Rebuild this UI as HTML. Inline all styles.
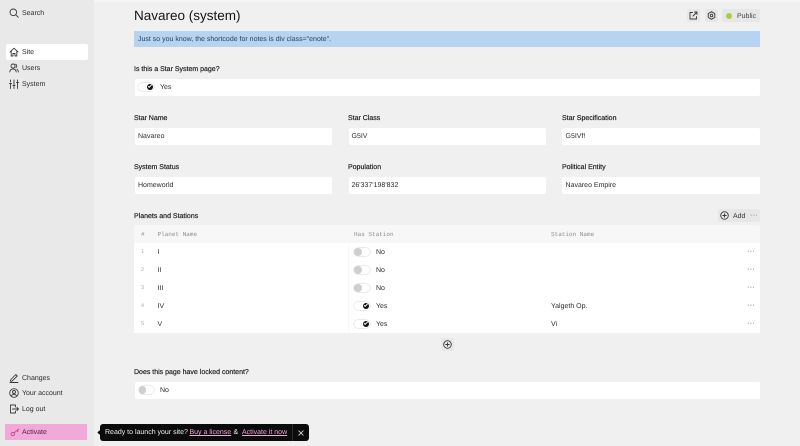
<!DOCTYPE html>
<html><head><meta charset="utf-8">
<style>
html,body{margin:0;padding:0}
body{width:800px;height:446px;overflow:hidden;background:#f0f0f0;font-family:"Liberation Sans",sans-serif;color:#222;text-rendering:geometricPrecision}
#w{position:absolute;left:0;top:0;width:800px;height:446px;overflow:hidden;filter:blur(.3px)}
.a{position:absolute}
.t{position:absolute;margin-top:1px;font-size:7px;line-height:10px;white-space:nowrap;color:#2a2a2a}
.l{position:absolute;margin-top:1px;font-size:7px;line-height:10px;white-space:nowrap;color:#222;-webkit-text-stroke:.2px #222}
.box{position:absolute;background:#fff;border-radius:2px}
.m{position:absolute;font-family:"Liberation Mono",monospace;font-size:6px;line-height:10px;color:#8e8e8e;white-space:nowrap}
.n{position:absolute;font-size:5.500px;line-height:10px;color:#aaa}
.d{position:absolute;font-size:7px;line-height:8px;color:#222;letter-spacing:.4px}
.tg{position:absolute;width:15.500px;height:7.500px;border-radius:4px;background:#fff;box-shadow:0 0 0 .5px #d4d4d4}
.tg.off:before{content:"";position:absolute;left:0;top:0;width:7.500px;height:7.500px;border-radius:4px;background:#cfcfcf}
.tg.on:before{content:"";position:absolute;right:.5px;top:.5px;width:6.500px;height:6.500px;border-radius:4px;background:#111}
.tg.on:after{content:"";position:absolute;right:2.300px;top:2.300px;width:2.600px;height:1.200px;border-left:.7px solid #fff;border-bottom:.7px solid #fff;transform:rotate(-45deg)}
svg{position:absolute;fill:none;stroke:#3a3a3a;stroke-width:.9;stroke-linecap:round;stroke-linejoin:round}
</style></head><body><div id="w">
<div class="a" style="left:0;top:0;width:94px;height:446px;background:#e9e9e9"></div>
<div class="a" style="left:94px;top:0;width:706px;height:2px;background:#f5f5f5"></div>

<svg style="left:9px;top:8px" width="10" height="10" viewBox="0 0 10 10"><circle cx="4.300" cy="4.300" r="3.300"/><path d="M6.800 6.800L9.300 9.300"/></svg>
<div class="t" style="left:22px;top:8px">Search</div>

<div class="box" style="left:6px;top:44px;width:81.500px;height:16px"></div>
<svg style="left:9px;top:47px" width="10" height="10" viewBox="0 0 10 10"><path d="M1 5L5 1.200L9 5M2.200 4.200V9H4V6.500H6V9H7.800V4.200"/></svg>
<div class="t" style="left:22px;top:47px">Site</div>
<svg style="left:9px;top:63px" width="10" height="10" viewBox="0 0 10 10"><circle cx="4" cy="3" r="2"/><path d="M.8 9C1 6.800 2.500 6 4 6S7 6.800 7.200 9M6.500 1.200A2 2 0 0 1 6.800 4.800M8 6.200C8.900 6.800 9.300 7.800 9.400 9"/></svg>
<div class="t" style="left:22px;top:63px">Users</div>
<svg style="left:9px;top:79px" width="10" height="10" viewBox="0 0 10 10"><path d="M1.500 1V3M.5 4.500H2.500M1.500 5V9.500M5 1V6M4 6.500H6M5 7.500V9.500M8.500 1V2.500M7.500 3.500H9.500M8.500 4V9.500"/></svg>
<div class="t" style="left:22px;top:79px">System</div>

<svg style="left:9px;top:372.500px" width="10" height="10" viewBox="0 0 10 10"><path d="M1.500 7L6.800 1.500L8.300 3L3 8.200H1.500ZM1 9.500H9"/></svg>
<div class="t" style="left:22px;top:372.500px">Changes</div>
<svg style="left:8.500px;top:388px" width="10" height="10" viewBox="0 0 10 10"><circle cx="5" cy="5" r="4.300"/><circle cx="5" cy="4" r="1.500"/><path d="M2.500 8C3 6.700 4 6.300 5 6.300S7 6.700 7.500 8"/></svg>
<div class="t" style="left:22px;top:388px">Your account</div>
<svg style="left:9px;top:404px" width="10" height="10" viewBox="0 0 10 10"><path d="M6.500 1H1.500V9H6.500M6.500 1V3M6.500 9V7M3.500 5H9.500M8 3.500L9.500 5L8 6.500"/></svg>
<div class="t" style="left:22px;top:404px">Log out</div>

<div class="a" style="left:5px;top:424px;width:82px;height:16px;background:#f2a9d8;border-radius:1px"></div>
<svg style="left:9.500px;top:427px;stroke:#c2428f" width="10" height="10" viewBox="0 0 10 10"><circle cx="2.800" cy="7" r="1.700"/><path d="M4.300 5.700L8.800 2M7 3.500L8 4.500"/></svg>
<div class="t" style="left:22px;top:427px;color:#4a2340">Activate</div>

<div class="a" style="left:100px;top:424px;width:208.500px;height:16.500px;background:#0b0b0b;border-radius:3px"></div>
<div class="a" style="left:97.500px;top:430.500px;width:3px;height:3px;background:#0b0b0b;transform:rotate(45deg)"></div>
<div class="t" style="left:105px;top:427px;color:#f2f2f2">Ready to launch your site?</div>
<div class="t" style="left:189.500px;top:427px;color:#f2a9d8;text-decoration:underline">Buy a license</div>
<div class="t" style="left:233.500px;top:427px;color:#f2f2f2">&amp;</div>
<div class="t" style="left:242px;top:427px;color:#f2a9d8;text-decoration:underline">Activate it now</div>
<div class="a" style="left:292px;top:424px;width:1px;height:16.500px;background:#2c2c2c"></div>
<svg style="left:297.500px;top:429.500px;stroke:#ddd;stroke-width:.8" width="6" height="6" viewBox="0 0 6 6"><path d="M.8.800L5.200 5.200M5.200.800L.8 5.200"/></svg>

<div class="a" style="left:134px;top:7px;font-size:13.500px;line-height:18px;color:#161616;white-space:nowrap">Navareo (system)</div>

<div class="a" style="left:687px;top:9px;width:13px;height:13px;background:#e7e7e7;border-radius:2px"></div>
<svg style="left:689px;top:11px" width="9" height="9" viewBox="0 0 9 9"><path d="M3.500 1.500H1V8H7.500V5.500M4 5L8 1M5.500 1H8V3.500"/></svg>
<div class="a" style="left:704.500px;top:9px;width:13px;height:13px;background:#e7e7e7;border-radius:2px"></div>
<svg style="left:706.500px;top:11px" width="9" height="9" viewBox="0 0 9 9"><circle cx="4.500" cy="4.500" r="1.300"/><path d="M4.500.7L7.800 2.600V6.400L4.500 8.300L1.200 6.400V2.600Z"/></svg>
<div class="a" style="left:722px;top:9px;width:38px;height:13px;background:#e7e7e7;border-radius:2px"></div>
<div class="a" style="left:726px;top:13px;width:6px;height:6px;border-radius:3px;background:#a5d13f"></div>
<div class="t" style="left:737px;top:11px;color:#444">Public</div>

<div class="a" style="left:134px;top:31px;width:626px;height:16px;background:#b6d3f1"></div>
<div class="t" style="left:138px;top:33.500px;color:#27425f">Just so you know, the shortcode for notes is div class="enote".</div>

<div class="l" style="left:134px;top:63.500px">Is this a Star System page?</div>
<div class="box" style="left:135px;top:79px;width:625px;height:17px"></div>
<div class="tg on" style="left:138px;top:83px"></div>
<div class="t" style="left:160px;top:82px">Yes</div>

<div class="l" style="left:134px;top:112.500px">Star Name</div>
<div class="l" style="left:348px;top:112.500px">Star Class</div>
<div class="l" style="left:562px;top:112.500px">Star Specification</div>
<div class="box" style="left:135px;top:128px;width:197px;height:17px"></div>
<div class="box" style="left:348.500px;top:128px;width:197.500px;height:17px"></div>
<div class="box" style="left:562px;top:128px;width:198px;height:17px"></div>
<div class="t" style="left:138px;top:131px">Navareo</div>
<div class="t" style="left:351.500px;top:131px">G5IV</div>
<div class="t" style="left:565.500px;top:131px">G5IVf!</div>

<div class="l" style="left:134px;top:161.500px">System Status</div>
<div class="l" style="left:348px;top:161.500px">Population</div>
<div class="l" style="left:562px;top:161.500px">Political Entity</div>
<div class="box" style="left:135px;top:177px;width:197px;height:17px"></div>
<div class="box" style="left:348.500px;top:177px;width:197.500px;height:17px"></div>
<div class="box" style="left:562px;top:177px;width:198px;height:17px"></div>
<div class="t" style="left:138px;top:180px">Homeworld</div>
<div class="t" style="left:351.500px;top:180px">26'337'198'832</div>
<div class="t" style="left:565.500px;top:180px">Navareo Empire</div>

<div class="l" style="left:134px;top:210.500px">Planets and Stations</div>
<div class="a" style="left:718px;top:209px;width:42px;height:13px;background:#e7e7e7;border-radius:2px"></div>
<svg style="left:720px;top:210.500px" width="9" height="9" viewBox="0 0 9 9"><circle cx="4.500" cy="4.500" r="3.800"/><path d="M4.500 2.700V6.300M2.700 4.500H6.300"/></svg>
<div class="t" style="left:733px;top:210.500px;color:#333">Add</div>
<div class="d" style="left:750px;top:212px;color:#555">···</div>

<div class="a" style="left:134px;top:225px;width:626px;height:18px;background:#f7f7f7;border-radius:2px 2px 0 0"></div>
<div class="a" style="left:134px;top:243px;width:626px;height:89.500px;background:#fff"></div>
<div class="a" style="left:347.500px;top:243px;width:1.500px;height:89.500px;background:#f8f8f8"></div>
<div class="m" style="left:141px;top:229.500px">#</div>
<div class="m" style="left:157.500px;top:229.500px">Planet Name</div>
<div class="m" style="left:354px;top:229.500px">Has Station</div>
<div class="m" style="left:551px;top:229.500px">Station Name</div>

<div class="n" style="left:141px;top:247px">1</div><div class="t" style="left:157.500px;top:247px">I</div>
<div class="n" style="left:141px;top:265px">2</div><div class="t" style="left:157.500px;top:265px">II</div>
<div class="n" style="left:141px;top:283px">3</div><div class="t" style="left:157.500px;top:283px">III</div>
<div class="n" style="left:141px;top:301px">4</div><div class="t" style="left:157.500px;top:301px">IV</div>
<div class="n" style="left:141px;top:319px">5</div><div class="t" style="left:157.500px;top:319px">V</div>

<div class="tg off" style="left:354px;top:248px"></div><div class="t" style="left:376px;top:247px">No</div>
<div class="tg off" style="left:354px;top:266px"></div><div class="t" style="left:376px;top:265px">No</div>
<div class="tg off" style="left:354px;top:284px"></div><div class="t" style="left:376px;top:283px">No</div>
<div class="tg on" style="left:354px;top:302px"></div><div class="t" style="left:376px;top:301px">Yes</div>
<div class="tg on" style="left:354px;top:320px"></div><div class="t" style="left:376px;top:319px">Yes</div>

<div class="t" style="left:551px;top:301px">Yalgeth Op.</div>
<div class="t" style="left:551px;top:319px">Vi</div>

<div class="d" style="left:747px;top:248px">···</div>
<div class="d" style="left:747px;top:266px">···</div>
<div class="d" style="left:747px;top:284px">···</div>
<div class="d" style="left:747px;top:302px">···</div>
<div class="d" style="left:747px;top:320px">···</div>

<div class="a" style="left:440.500px;top:337.500px;width:13px;height:13px;background:#e7e7e7;border-radius:2px"></div>
<svg style="left:442.500px;top:339.500px" width="9" height="9" viewBox="0 0 9 9"><circle cx="4.500" cy="4.500" r="3.800"/><path d="M4.500 2.700V6.300M2.700 4.500H6.300"/></svg>

<div class="l" style="left:134px;top:366.500px">Does this page have locked content?</div>
<div class="box" style="left:135px;top:381.500px;width:625px;height:17.500px"></div>
<div class="tg off" style="left:138.500px;top:386px"></div>
<div class="t" style="left:160px;top:385px">No</div>
</div></body></html>
